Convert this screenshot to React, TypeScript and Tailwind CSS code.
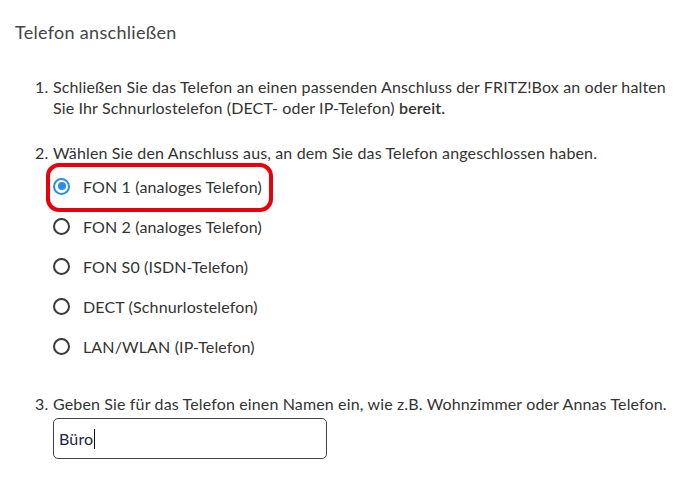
import React from "react";

const font = { fontFamily: "Lato, 'Noto Sans', sans-serif" };

function Radio({ checked }: { checked?: boolean }) {
  return checked ? (
    <span className="flex h-[17px] w-[17px] shrink-0 items-center justify-center rounded-full border-2 border-[#2b8ee6] bg-white">
      <span className="h-[8px] w-[8px] rounded-full bg-[#2b8ee6]" />
    </span>
  ) : (
    <span className="h-[17px] w-[17px] shrink-0 rounded-full border-2 border-[#3a3a3a] bg-white" />
  );
}

export default function App() {
  const options = [
    "FON 1 (analoges Telefon)",
    "FON 2 (analoges Telefon)",
    "FON S0 (ISDN-Telefon)",
    "DECT (Schnurlostelefon)",
    "LAN/WLAN (IP-Telefon)",
  ];
  return (
    <div className="h-[495px] w-[685px] bg-white text-[#333]" style={font}>
      <div className="pl-[15px] pt-[20px]">
        <h1 className="text-[18px] leading-[24px] tracking-[0.3px] text-[#444]">Telefon anschließen</h1>
      </div>
      <div className="pl-[35px] pt-[32px] text-[16px] leading-[21px] tracking-[0.14px]">
        <div className="flex">
          <span className="w-[18px] shrink-0">1.</span>
          <p>
            Schließen Sie das Telefon an einen passenden Anschluss der FRITZ!Box an oder halten
            <br />
            Sie Ihr Schnurlostelefon (DECT- oder IP-Telefon) <span className="font-semibold">bereit.</span>
          </p>
        </div>
        <div className="mt-[24px] flex">
          <span className="w-[18px] shrink-0">2.</span>
          <p>Wählen Sie den Anschluss aus, an dem Sie das Telefon angeschlossen haben.</p>
        </div>
        <div className="mt-[3px] flex flex-col pl-[18px]">
          {options.map((o, i) => (
            <div key={o} className="relative flex h-[40px] items-center gap-[13px]">
              <Radio checked={i === 0} />
              <span>{o}</span>
              {i === 0 && (
                <div className="pointer-events-none absolute left-[-7px] top-[-3px] h-[49px] w-[227px] rounded-[13px] border-[4px] border-[#e8000b]" />
              )}
            </div>
          ))}
        </div>
        <div className="mt-[27px] flex">
          <span className="w-[18px] shrink-0">3.</span>
          <p>Geben Sie für das Telefon einen Namen ein, wie z.B. Wohnzimmer oder Annas Telefon.</p>
        </div>
        <div className="ml-[18px] mt-[4px] flex h-[41px] w-[274px] items-center rounded-[5px] border border-[#444] px-[5px] text-[#1c2740]">
          <span>Büro</span>
          <span className="ml-[1px] h-[20px] w-[1px] bg-[#111]" />
        </div>
      </div>
    </div>
  );
}
